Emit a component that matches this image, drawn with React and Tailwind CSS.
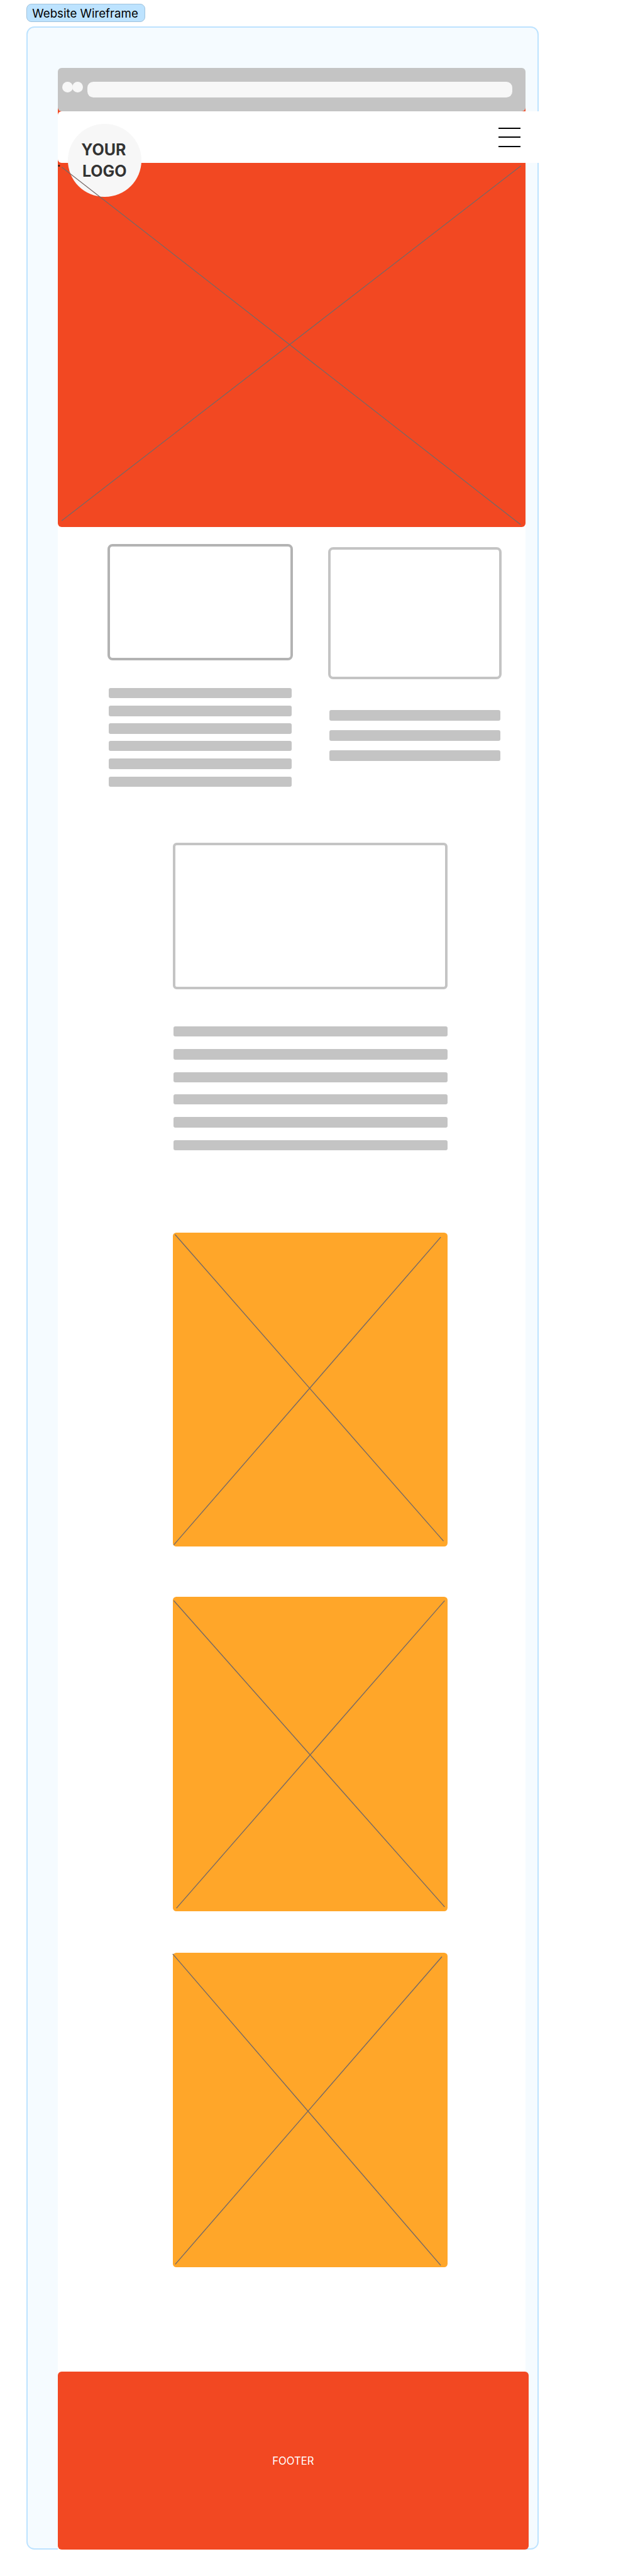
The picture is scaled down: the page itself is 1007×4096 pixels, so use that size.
function Cross({ lines }) {
  return (
    <svg viewBox="0 0 840 960" className="block size-full overflow-visible" fill="none" stroke="#756967" strokeWidth="2.7">
      {lines.map((d) => (
        <path key={d} d={d} />
      ))}
    </svg>
  );
}

function Bar() {
  return <div className="h-[16.65px] shrink-0 rounded-[3px] bg-[#c4c4c4]" />;
}

function Bars({ className }) {
  return (
    <div className={"flex flex-col " + className}>
      <Bar />
      <Bar />
      <Bar />
    </div>
  );
}

function Hero() {
  return (
    <div className="relative flex h-[729.4px] w-[744px] shrink-0 flex-col rounded-b-[6px] bg-[linear-gradient(transparent_30px,#f24822_30px)]">
      <div className="flex h-[68.6px] shrink-0 rounded-[6px] bg-[#c4c4c4] pt-[21.7px] pl-[7.7px]">
        <div className="size-[16.6px] rounded-full bg-[#f7f7f7]" />
        <div className="-ml-[0.8px] size-[16.6px] rounded-full bg-[#f7f7f7]" />
        <div className="ml-[7.1px] h-[25px] w-[676px] rounded-[9.5px] bg-[#f7f7f7]" />
      </div>
      <header className="h-[82.2px] w-[800px] shrink-0 rounded-[6px] bg-white pt-[26px] pl-[701.4px]">
        <div className="flex w-[35.4px] flex-col gap-[12.65px]">
          <div className="h-[2px] bg-black" />
          <div className="h-[2px] bg-black" />
          <div className="h-[2px] bg-black" />
        </div>
      </header>
      <div className="absolute top-[88.4px] left-[16.7px] flex size-[116.5px] flex-col rounded-full bg-[#f7f7f7] pt-[25.8px] pl-[21px] text-[25px] leading-[33.3px] font-bold text-[#333333]">
        <span>YOUR</span>
        <span className="pl-[1.6px]">LOGO</span>
      </div>
      <svg viewBox="176 208 1430 1402" className="absolute inset-0 size-full" fill="none" stroke="#756967" strokeWidth="2.4">
        <path d="M187.8 511L1591.3 1604" />
        <path d="M1592 507.3L187.8 1591.8" />
        <circle cx="179.6" cy="507" r="3" fill="#1e1e1e" stroke="none" />
      </svg>
    </div>
  );
}

export default function App() {
  return (
    <div className="h-[4096px] w-[1007px] overflow-hidden bg-white pt-[6.2px] pl-[41.6px] font-['Inter',sans-serif]">
      <div className="flex h-[29.2px] w-[189.4px] items-center rounded-[8px] border border-[#9fc2dc] bg-[#bde3ff] pt-[2px] pl-[8.7px] text-[18.7px] whitespace-nowrap text-black">
        Website Wireframe
      </div>
      <div className="mt-[6.2px] h-[4012.8px] w-[815.9px] rounded-[12.5px] border-2 border-[#bde3ff] bg-[#f5fbff] pt-[64.7px] pl-[48px]">
        <main className="flex h-[3946.1px] w-[744px] flex-col bg-[linear-gradient(transparent_300px,white_300px)]">
          <Hero />
          <section className="flex h-[502.8px] shrink-0 items-start pt-[27.2px] pl-[79.1px]">
            <div className="w-[295.5px]">
              <div className="h-[185.5px] rounded-[8px] border-4 border-[#b3b3b3] bg-white" />
              <div className="mx-[2.1px] mt-[43.2px] flex flex-col gap-[10.6px]">
                <Bars className="gap-[11.8px]" />
                <Bars className="gap-[11.8px]" />
              </div>
            </div>
            <div className="mt-[5.2px] ml-[56.2px] w-[275.9px]">
              <div className="h-[209.8px] rounded-[8px] border-4 border-[#c4c4c4] bg-white" />
              <Bars className="mx-[2.1px] mt-[49.1px] gap-[15.5px]" />
            </div>
          </section>
          <section className="ml-[183.1px] w-[437.2px] shrink-0">
            <div className="h-[233px] rounded-[6px] border-4 border-[#c4c4c4] bg-white" />
            <div className="mt-[58.4px] ml-px flex flex-col gap-[18.6px]">
              <Bars className="gap-[19.75px]" />
              <Bars className="gap-[19.75px]" />
            </div>
            <div className="mt-[130.3px] h-[499.5px] rounded-[5.5px] bg-[#ffa629]">
              <Cross lines={["M6.6 5.7L827.3 942.5", "M818.9 13.7L2.4 954.4"]} />
            </div>
            <div className="mt-[80px] h-[499.5px] rounded-[5.5px] bg-[#ffa629]">
              <Cross lines={["M2.4 11.7L830.9 947.7", "M830.9 11.7L10.8 951.6"]} />
            </div>
            <div className="mt-[66.8px] h-[499.5px] rounded-[5.5px] bg-[#ffa629]">
              <Cross lines={["M-0.6 3.6L818.9 955.5", "M822.5 12L7.2 952"]} />
            </div>
          </section>
          <footer className="mt-[166.4px] flex h-[283.1px] w-[749.4px] shrink-0 items-center justify-center rounded-[6px] bg-[#f24822] pt-px text-[16.65px] text-white">
            FOOTER
          </footer>
        </main>
      </div>
    </div>
  );
}
